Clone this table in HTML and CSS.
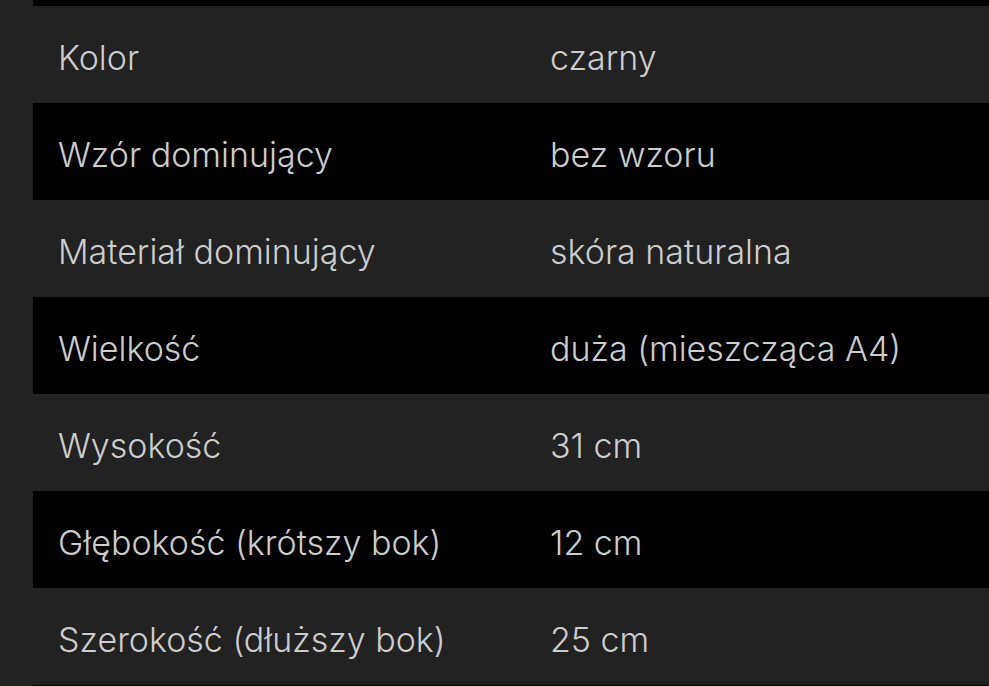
FILE: index.html
```html
<!DOCTYPE html>
<html lang="pl">
<head>
<meta charset="utf-8">
<link rel="stylesheet" href="styles.css">
</head>
<body>
<div class="page">
  <div class="table">
    <div class="cap"></div>
    <div class="row gray"><div class="k">Kolor</div><div class="v">czarny</div></div>
    <div class="row black"><div class="k">Wzór dominujący</div><div class="v">bez wzoru</div></div>
    <div class="row gray"><div class="k">Materiał dominujący</div><div class="v">skóra naturalna</div></div>
    <div class="row black"><div class="k">Wielkość</div><div class="v">duża (mieszcząca A4)</div></div>
    <div class="row gray"><div class="k">Wysokość</div><div class="v">31 cm</div></div>
    <div class="row black"><div class="k">Głębokość (krótszy bok)</div><div class="v">12 cm</div></div>
    <div class="row gray"><div class="k">Szerokość (dłuższy bok)</div><div class="v">25 cm</div></div>
    <div class="cap"></div>
  </div>
</div>
</body>
</html>
```
FILE: styles.css
```css
html, body {
  margin: 0;
  padding: 0;
  background: #222222;
  width: 989px;
  height: 686px;
  overflow: hidden;
}
.page {
  padding-left: 33px;
}
.table {
  display: flex;
  flex-direction: column;
  font-family: "Inter", sans-serif;
  font-size: 34px;
  font-weight: 300;
  color: #cdcdcd;
}
.cap {
  height: 6px;
  background: #000;
}
.row {
  height: 97px;
  display: flex;
  align-items: center;
  padding-left: 25px;
  padding-top: 6px;
  box-sizing: border-box;
}
.gray { background: #222222; }
.black { background: #000; }
.k { width: 492px; }
.v { flex: 1; }
```
